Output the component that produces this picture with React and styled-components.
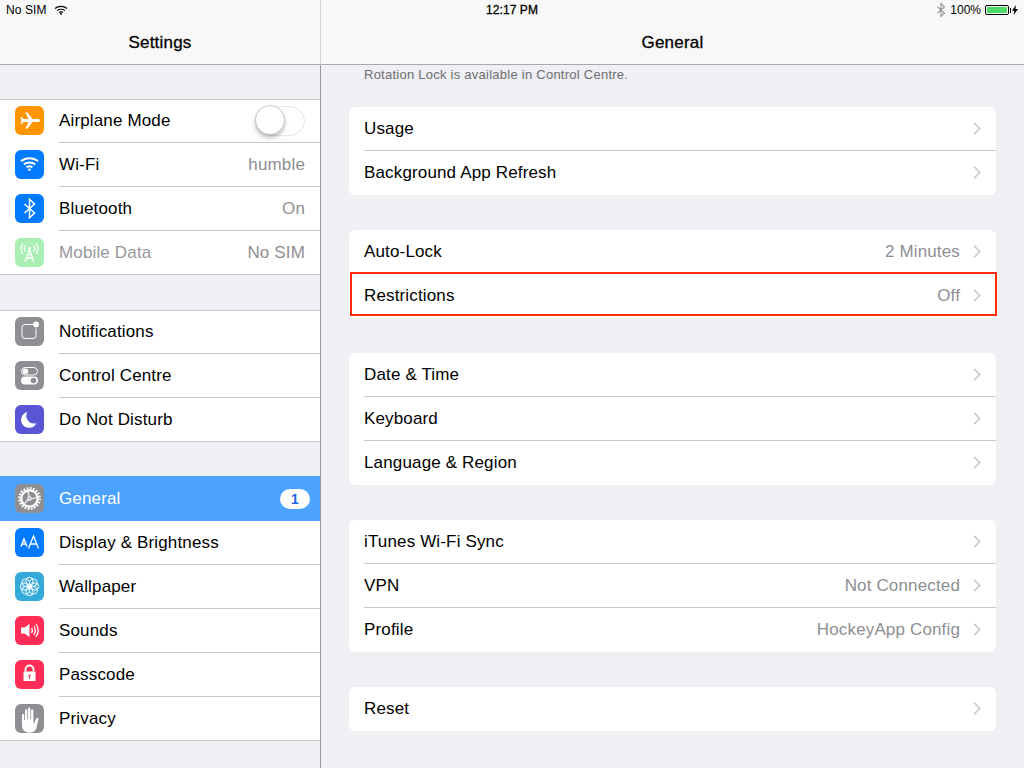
import styled, { createGlobalStyle } from "styled-components";

const GlobalStyle = createGlobalStyle`
  html, body {
    margin: 0;
    height: 100%;
    overflow: hidden;
    background: #efeff4;
  }
  body {
    font-family: "Liberation Sans", Arial, sans-serif;
    -webkit-font-smoothing: antialiased;
  }
`;

const AirplaneIcon = () => (
  <svg width="29" height="29" viewBox="0 0 29 29" fill="#fff">
    <path d="M10.5 6.5h2l5 6.500h5.500c1.200 0 2 .6 2 1.500s-.8 1.500-2 1.500h-5.500l-5 6.500h-2l3-6.500H8.500l-1.700 2H5.500l1-3.500-1-3.500h1.300l1.700 2h5z" />
  </svg>
);

const WifiIcon = () => (
  <svg width="29" height="29" viewBox="0 0 29 29" fill="none" stroke="#fff" strokeWidth="2">
    <path d="M6 11.200c4.800-4 12.200-4 17 0" />
    <path d="M8.800 14.400c3.200-2.600 8.200-2.600 11.400 0" />
    <path d="M11.600 17.400c1.700-1.300 4.100-1.300 5.800 0" />
    <circle cx="14.500" cy="19.800" r="1.200" fill="#fff" stroke="none" />
  </svg>
);

const BluetoothIcon = ({ color = "#fff", size = 29 }) => (
  <svg width={size} height={size} viewBox="0 0 29 29" fill="none" stroke={color} strokeWidth="1.500">
    <path d="M9.500 10l10 9-5 4.800V5.200l5 4.800-10 9" />
  </svg>
);

const AntennaIcon = () => (
  <svg width="29" height="29" viewBox="0 0 29 29" fill="none" stroke="#fff" strokeWidth="1.200">
    <path d="M14.500 11v2M14.500 11.500L10 24M14.500 11.500L19 24M11.800 19l5.600 2M17.200 19l-5.600 2M12.800 15.800l3.600 1.400M16.200 15.800l-3.600 1.400" />
    <circle cx="14.500" cy="10.500" r="1.400" fill="#fff" stroke="none" />
    <path d="M10.500 7.500c-1.600 1.800-1.600 4.400 0 6.200M18.500 7.500c1.600 1.800 1.600 4.400 0 6.200M8 5.500c-2.800 3-2.800 7.400 0 10.400M21 5.500c2.800 3 2.800 7.400 0 10.400" />
  </svg>
);

const NotificationsIcon = () => (
  <svg width="29" height="29" viewBox="0 0 29 29" fill="none" stroke="#fff" strokeWidth="1">
    <path d="M18 7.500H10a3 3 0 0 0-3 3v8a3 3 0 0 0 3 3h8a3 3 0 0 0 3-3v-7" />
    <circle cx="21" cy="7.500" r="3" fill="#fff" stroke="none" />
  </svg>
);

const ControlIcon = () => (
  <svg width="29" height="29" viewBox="0 0 29 29">
    <rect x="6.500" y="6.500" width="16" height="7.500" rx="3.750" fill="none" stroke="#fff" />
    <circle cx="10.500" cy="10.250" r="2.800" fill="#fff" />
    <rect x="6" y="15.500" width="17" height="8" rx="4" fill="#fff" />
    <circle cx="18.500" cy="19.500" r="2.800" fill="#8e8e93" />
  </svg>
);

const MoonIcon = () => (
  <svg width="29" height="29" viewBox="0 0 29 29" fill="#fff">
    <path d="M12.500 7a8 8 0 1 0 9 11 7.500 7.500 0 0 1-9-11z" />
  </svg>
);

const GearIcon = () => (
  <svg width="29" height="29" viewBox="0 0 29 29" fill="none" stroke="#fff">
    <circle cx="14.500" cy="14.500" r="10.200" strokeWidth="2.400" strokeDasharray="1.800 1.400" />
    <circle cx="14.500" cy="14.500" r="8.200" strokeWidth="2.200" />
    <circle cx="14.500" cy="14.500" r="1.600" strokeWidth="1.200" />
    <path d="M14.500 12.900L12.500 6.800M16 15l6-1.800M13.300 15.600l-4.500 4.600" strokeWidth="1.200" />
  </svg>
);

const DisplayIcon = () => (
  <svg width="29" height="29" viewBox="0 0 29 29" fill="none" stroke="#fff">
    <path d="M6 18.500l3-7.500 3 7.500M7.200 16h3.600" strokeWidth="1.500" />
    <path d="M13.500 20.500l5-12.500 5 12.500M15.300 16h6.400" strokeWidth="1.300" />
  </svg>
);

const PETALS = [0, 45, 90, 135, 180, 225, 270, 315];

const FlowerIcon = () => (
  <svg width="29" height="29" viewBox="0 0 29 29" fill="none" stroke="#fff" strokeWidth="1">
    {PETALS.map((angle) => (
      <circle key={angle} cx="14.500" cy="9" r="3.700" transform={`rotate(${angle} 14.500 14.500)`} />
    ))}
    <circle cx="14.500" cy="14.500" r="1.600" fill="#fff" stroke="none" />
  </svg>
);

const SoundIcon = () => (
  <svg width="29" height="29" viewBox="0 0 29 29" fill="none" stroke="#fff" strokeWidth="1.200">
    <path d="M6 11.500h3.500l5-3.500v13l-5-3.500H6z" fill="#fff" stroke="none" />
    <path d="M16.500 12c1.100 1.500 1.100 3.500 0 5M18.800 10c1.900 2.800 1.900 6.200 0 9M21 8c2.700 4 2.700 9 0 13" />
  </svg>
);

const LockIcon = () => (
  <svg width="29" height="29" viewBox="0 0 29 29">
    <path d="M10.500 11.500v-2a4 4 0 0 1 8 0v2" fill="none" stroke="#fff" strokeWidth="1.800" />
    <rect x="8.500" y="11.500" width="12" height="9.500" rx="0.500" fill="#fff" />
    <circle cx="14.500" cy="15.500" r="1.100" fill="#ff2d55" />
    <rect x="14" y="15.800" width="1" height="3" fill="#ff2d55" />
  </svg>
);

const HandIcon = () => (
  <svg width="29" height="29" viewBox="0 0 29 29" fill="#fff">
    <path
      transform="translate(-3 -3.200) scale(1.250)"
      d="M8 11.500c0-1.300 1.800-1.300 1.800 0v4h.6V7.800c0-1.300 1.800-1.300 1.800 0v7h.6V6.300c0-1.300 1.900-1.300 1.900 0v8.500h.6V7.800c0-1.300 1.800-1.300 1.800 0v9.700l.7.200 1.600-3.500c.6-1.200 2.200-.6 1.700.7L19.500 22c-.9 2-2.300 3.500-5 3.500-3.600 0-6.500-1.800-6.500-6z"
    />
  </svg>
);

const Chevron = () => (
  <ChevronMark width="8" height="13" viewBox="0 0 8 13" fill="none" stroke="#c7c7cc" strokeWidth="1.600">
    <path d="M1 .8l5.700 5.700L1 12.200" />
  </ChevronMark>
);

const sidebarGroups = [
  [
    { label: "Airplane Mode", color: "#ff9500", icon: <AirplaneIcon />, toggle: true },
    { label: "Wi-Fi", color: "#007aff", icon: <WifiIcon />, value: "humble" },
    { label: "Bluetooth", color: "#007aff", icon: <BluetoothIcon />, value: "On" },
    { label: "Mobile Data", color: "#a9efb4", icon: <AntennaIcon />, value: "No SIM", disabled: true },
  ],
  [
    { label: "Notifications", color: "#8e8e93", icon: <NotificationsIcon /> },
    { label: "Control Centre", color: "#8e8e93", icon: <ControlIcon /> },
    { label: "Do Not Disturb", color: "#5856d6", icon: <MoonIcon /> },
  ],
  [
    { label: "General", color: "#8e8e93", icon: <GearIcon />, selected: true, badge: "1" },
    { label: "Display & Brightness", color: "#007aff", icon: <DisplayIcon /> },
    { label: "Wallpaper", color: "#34aadc", icon: <FlowerIcon /> },
    { label: "Sounds", color: "#ff2d55", icon: <SoundIcon /> },
    { label: "Passcode", color: "#ff2d55", icon: <LockIcon /> },
    { label: "Privacy", color: "#8e8e93", icon: <HandIcon /> },
  ],
];

const generalCards = [
  [{ label: "Usage" }, { label: "Background App Refresh" }],
  [{ label: "Auto-Lock", value: "2 Minutes" }, { label: "Restrictions", value: "Off", marked: true }],
  [{ label: "Date & Time" }, { label: "Keyboard" }, { label: "Language & Region" }],
  [
    { label: "iTunes Wi-Fi Sync" },
    { label: "VPN", value: "Not Connected" },
    { label: "Profile", value: "HockeyApp Config" },
  ],
  [{ label: "Reset" }],
];

const App = () => (
  <>
    <GlobalStyle />
    <Screen>
      <StatusBar>
        <StatusLeft>
          No SIM
          <svg width="14" height="10" viewBox="0 0 14 10" fill="none" stroke="#000" strokeWidth="1.200">
            <path d="M1 3.500c3.300-2.800 8.700-2.800 12 0M3 5.600c2.100-1.800 5.900-1.800 8 0M5 7.500c1.100-.8 2.900-.8 4 0" />
            <circle cx="7" cy="8.900" r=".9" fill="#000" stroke="none" />
          </svg>
        </StatusLeft>
        <StatusTime>12:17 PM</StatusTime>
        <StatusRight>
          <StatusBluetooth>
            <BluetoothIcon color="#8e8e93" size={20} />
          </StatusBluetooth>
          <span>100%</span>
          <Battery>
            <BatteryFill />
          </Battery>
          <svg width="6" height="10" viewBox="0 0 6 10" fill="#000">
            <path d="M4 0L0 5.800h2.400L1.600 10 6 3.900H3.400z" />
          </svg>
        </StatusRight>
      </StatusBar>

      <Sidebar>
        <SidebarNav>Settings</SidebarNav>
        <SidebarList>
          {sidebarGroups.map((rows) => (
            <SidebarGroup key={rows[0].label}>
              {rows.map((row) => (
                <SidebarRow key={row.label} $selected={row.selected}>
                  <IconTile $color={row.color}>{row.icon}</IconTile>
                  <SidebarCell $selected={row.selected}>
                    <SidebarLabel $disabled={row.disabled} $selected={row.selected}>
                      {row.label}
                    </SidebarLabel>
                    {row.value && <SidebarValue>{row.value}</SidebarValue>}
                    {row.toggle && (
                      <Toggle>
                        <ToggleKnob />
                      </Toggle>
                    )}
                    {row.badge && <Badge>{row.badge}</Badge>}
                  </SidebarCell>
                </SidebarRow>
              ))}
            </SidebarGroup>
          ))}
        </SidebarList>
      </Sidebar>

      <Detail>
        <NavBar>General</NavBar>
        <DetailBody>
          <Note>Rotation Lock is available in Control Centre.</Note>
          {generalCards.map((rows) => (
            <Card key={rows[0].label}>
              {rows.map((row) => (
                <CardRow key={row.label} $marked={row.marked}>
                  <CardCell>
                    <CardLabel>{row.label}</CardLabel>
                    {row.value && <CardValue>{row.value}</CardValue>}
                    <Chevron />
                  </CardCell>
                </CardRow>
              ))}
            </Card>
          ))}
        </DetailBody>
      </Detail>
    </Screen>
  </>
);

const Screen = styled.div`
  position: relative;
  display: grid;
  grid-template-columns: 321px 1fr;
  width: 1024px;
  height: 768px;
  overflow: hidden;
  color: #000;
`;

const StatusBar = styled.div`
  position: absolute;
  top: 0;
  left: 0;
  right: 0;
  z-index: 2;
  display: grid;
  grid-template-columns: 1fr auto 1fr;
  align-items: center;
  height: 20px;
  padding: 0 6px;
  font-size: 12px;
`;

const StatusLeft = styled.div`
  display: flex;
  align-items: center;
  gap: 7px;
  letter-spacing: 0.1px;
`;

const StatusTime = styled.div`
  letter-spacing: 0.1px;
  -webkit-text-stroke: 0.3px #000;
`;

const StatusRight = styled.div`
  display: flex;
  align-items: center;
  justify-content: flex-end;
  gap: 3px;

  span {
    margin-left: 1px;
  }
`;

const StatusBluetooth = styled.div`
  display: flex;
  margin-right: -5px;
`;

const Battery = styled.div`
  position: relative;
  box-sizing: border-box;
  width: 24px;
  height: 10px;
  margin-left: 1px;
  padding: 1px;
  border: 1px solid #000;
  border-radius: 2px;

  &:after {
    content: "";
    position: absolute;
    right: -3px;
    top: 1.5px;
    width: 1.5px;
    height: 5px;
    background: #000;
  }
`;

const BatteryFill = styled.div`
  height: 100%;
  background: #4cd964;
  border-radius: 1px;
`;

const Sidebar = styled.aside`
  display: flex;
  flex-direction: column;
  min-height: 0;
  border-right: 1px solid #98989c;
`;

const Detail = styled.main`
  display: flex;
  flex-direction: column;
  min-height: 0;
`;

const NavBar = styled.header`
  box-sizing: border-box;
  flex: none;
  height: 65px;
  padding-top: 20px;
  text-align: center;
  line-height: 46px;
  font-size: 17px;
  letter-spacing: 0.2px;
  -webkit-text-stroke: 0.3px #000;
  background: #f8f8f8;
  border-bottom: 1px solid #a9a9ad;
`;

const SidebarNav = styled(NavBar)`
  margin-right: -1px;
  border-right: 1px solid #d6d6d8;
`;

const SidebarList = styled.div`
  display: flex;
  flex-direction: column;
  gap: 35px;
  padding-top: 34px;
`;

const SidebarGroup = styled.section`
  background: #fff;
  box-shadow: inset 0 1px #c8c7cc, inset 0 -1px #c8c7cc;
`;

const SidebarRow = styled.div`
  display: flex;
  gap: 15px;
  height: 44px;
  padding-left: 15px;
  ${(p) => p.$selected && "background: #4ca3ff; box-shadow: 0 -1px #4ca3ff;"}

  &:last-child > div {
    border-bottom-color: transparent;
  }
`;

const IconTile = styled.div`
  flex: none;
  width: 29px;
  height: 29px;
  margin-top: 7px;
  border-radius: 6px;
  overflow: hidden;
  background: ${(p) => p.$color};

  svg {
    display: block;
  }
`;

const SidebarCell = styled.div`
  flex: 1;
  display: flex;
  align-items: center;
  justify-content: space-between;
  box-sizing: border-box;
  padding-right: 15px;
  border-bottom: 1px solid ${(p) => (p.$selected ? "transparent" : "#c8c7cc")};
`;

const SidebarLabel = styled.span`
  font-size: 17px;
  letter-spacing: 0.15px;
  color: ${(p) => (p.$selected ? "#fff" : p.$disabled ? "#98989c" : "#000")};
`;

const SidebarValue = styled.span`
  font-size: 17px;
  letter-spacing: 0.15px;
  color: #8e8e93;
`;

const Toggle = styled.div`
  position: relative;
  box-sizing: border-box;
  width: 50px;
  height: 30px;
  border: 1.5px solid #e5e5ea;
  border-radius: 15px;
  background: #fff;
`;

const ToggleKnob = styled.div`
  position: absolute;
  left: -1.5px;
  top: -1.5px;
  box-sizing: border-box;
  width: 30px;
  height: 30px;
  border: 0.5px solid #c8c8cc;
  border-radius: 50%;
  background: #fff;
  box-shadow: 0 3px 4px rgba(0, 0, 0, 0.25);
`;

const Badge = styled.div`
  width: 30px;
  height: 20px;
  margin-right: -5px;
  border-radius: 10px;
  background: #fff;
  color: #1f63e0;
  font-size: 14px;
  font-weight: 700;
  line-height: 20px;
  text-align: center;
`;

const DetailBody = styled.div`
  flex: 1;
  min-height: 0;
  padding: 0 28px;
`;

const Note = styled.p`
  height: 42px;
  margin: 0;
  padding-left: 15px;
  font-size: 13px;
  line-height: 19px;
  letter-spacing: 0.25px;
  color: #6d6d72;
`;

const Card = styled.section`
  margin-bottom: 35px;
  background: #fff;
  border-radius: 6px;
`;

const CardRow = styled.div`
  position: relative;
  height: 44px;
  padding-left: 15px;

  &:last-child > div {
    border-bottom-color: transparent;
  }

  ${(p) =>
    p.$marked &&
    `
    &:after {
      content: "";
      position: absolute;
      left: 1px;
      right: -1px;
      top: -2px;
      bottom: 2px;
      border: 2px solid #ff2d0a;
    }
  `}
`;

const CardCell = styled.div`
  display: flex;
  align-items: center;
  box-sizing: border-box;
  height: 44px;
  padding-right: 15px;
  border-bottom: 1px solid #c8c7cc;
`;

const CardLabel = styled.span`
  flex: 1;
  font-size: 17px;
  letter-spacing: 0.15px;
`;

const CardValue = styled.span`
  margin-right: 13px;
  font-size: 17px;
  letter-spacing: 0.15px;
  color: #8e8e93;
`;

const ChevronMark = styled.svg`
  flex: none;
`;

export default App;
